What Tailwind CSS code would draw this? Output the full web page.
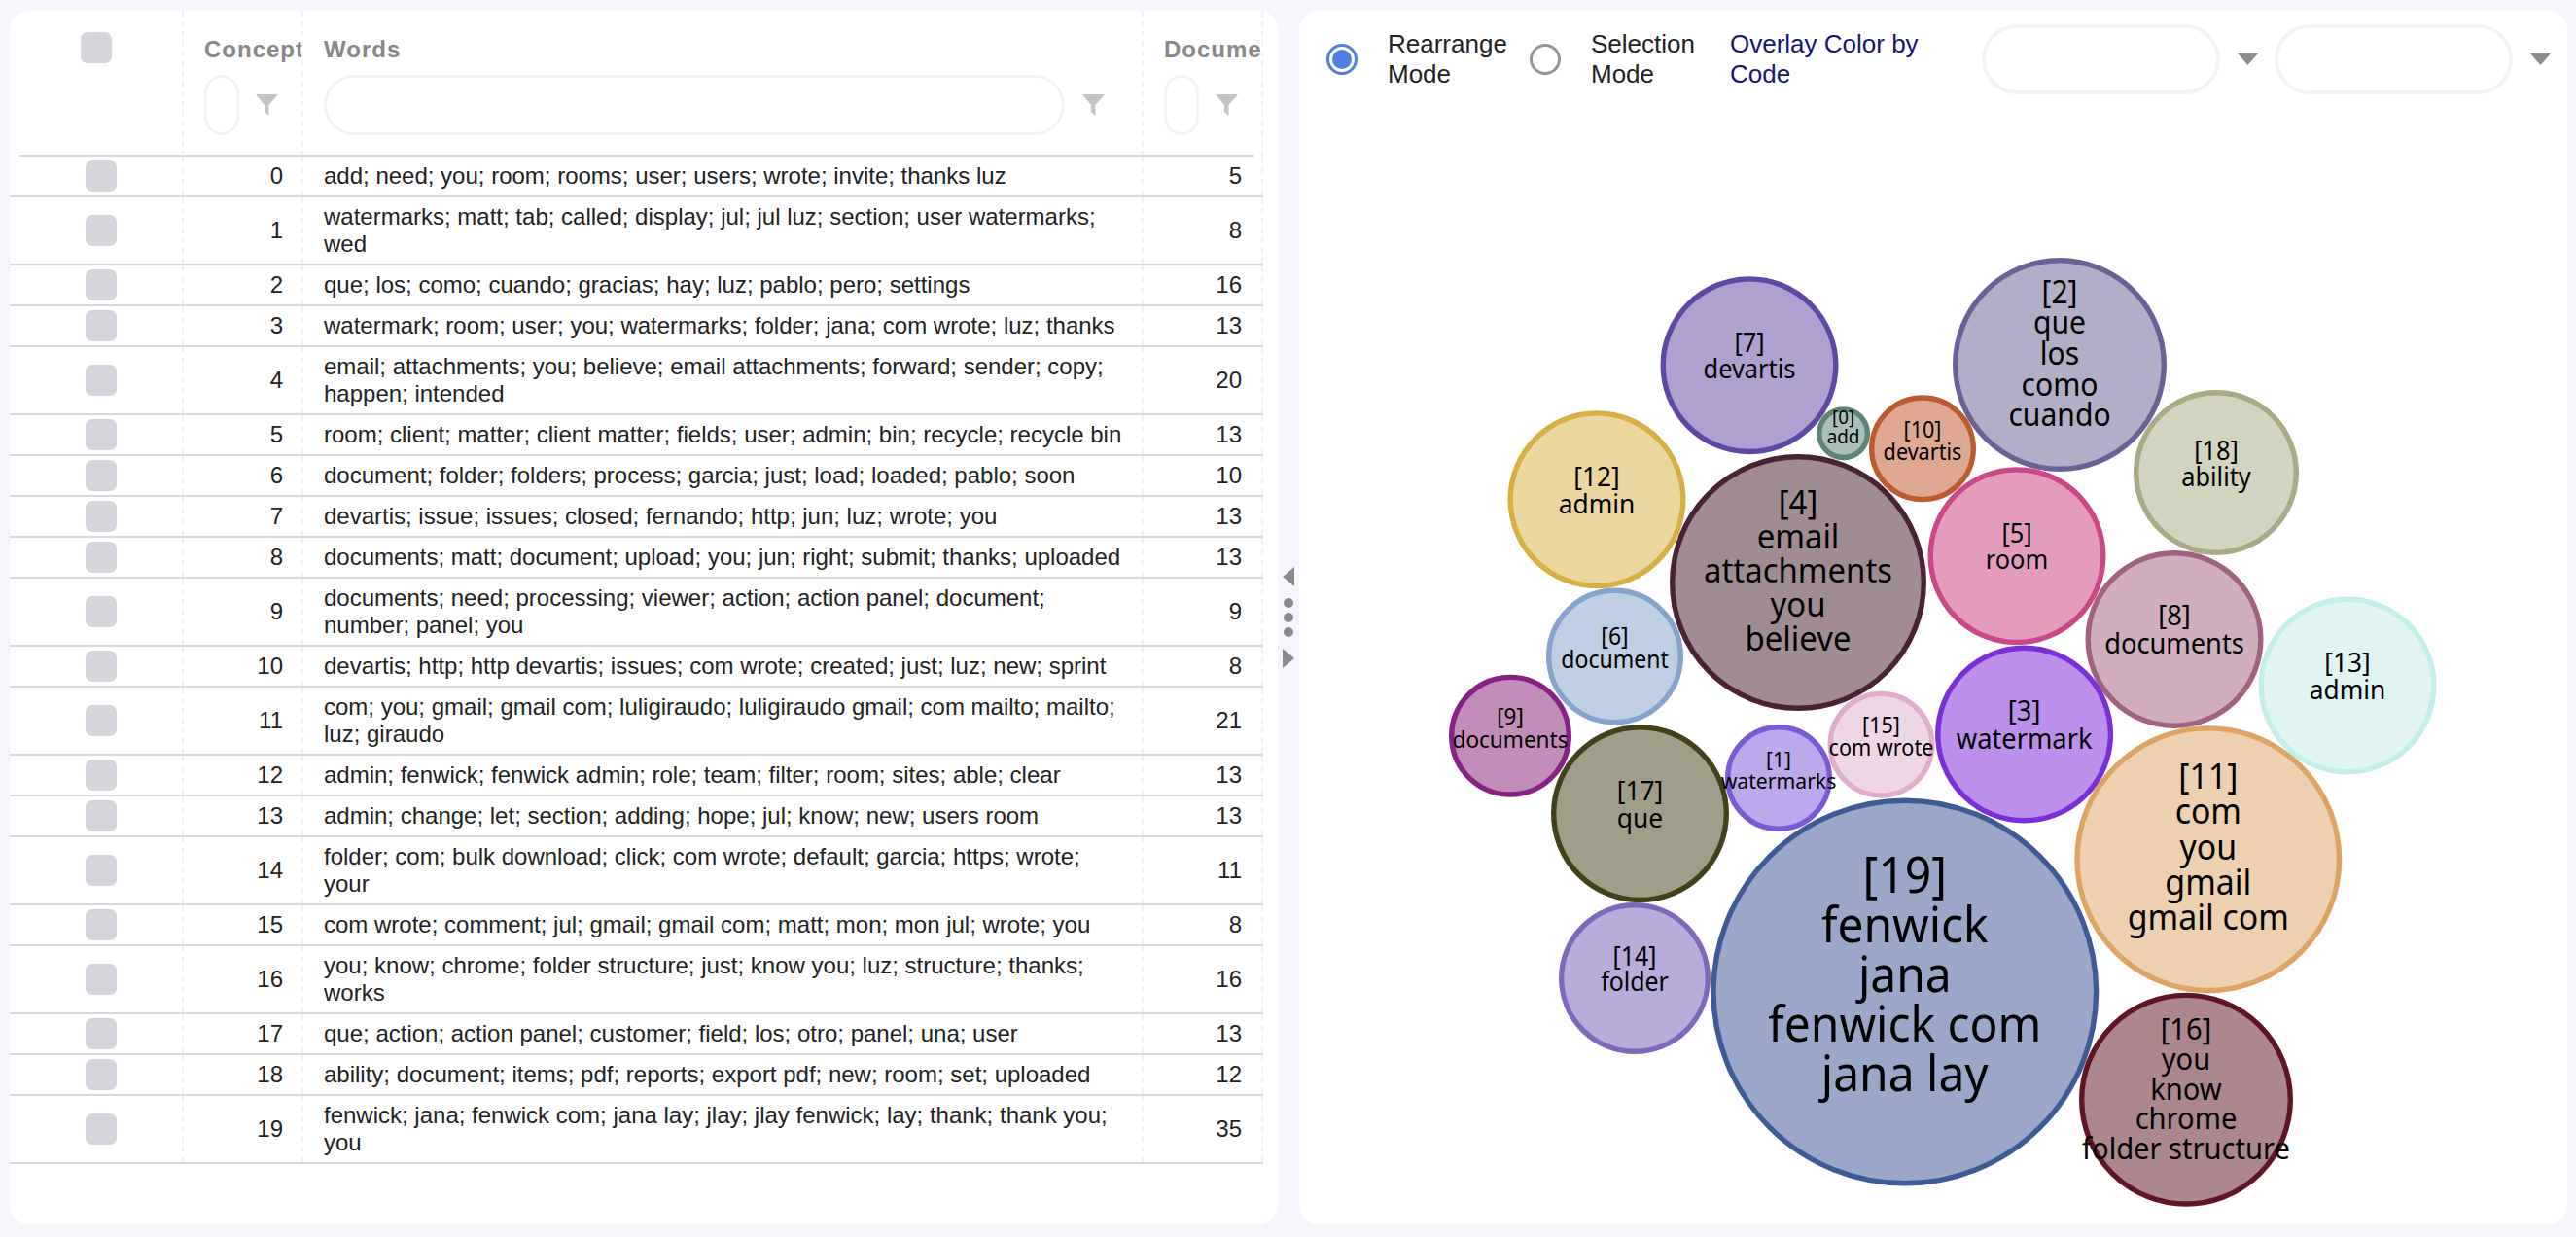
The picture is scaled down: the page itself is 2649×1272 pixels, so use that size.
<!DOCTYPE html>
<html lang="en">
  <head>
    <meta charset="UTF-8" />
    <title>Concepts</title>
    <script src="https://cdn.jsdelivr.net/npm/@tailwindcss/browser@4"></script>
  </head>
  <body class="bg-[#f4f6fb] h-[1272px] w-[2649px] overflow-hidden font-['Liberation_Sans',Arial,sans-serif]">
    <div class="flex h-full pt-[11px] pb-[13px] pl-[10px] pr-[9px]">
      <!-- left: concept table -->
      <div class="w-[1304px] bg-white rounded-[20px] overflow-hidden">
        <div class="w-[1289px]">
          <!-- header -->
          <div class="flex h-[150px] relative text-[24px] font-bold tracking-[1px] text-[#888888]">
            <div class="absolute left-[10px] right-[10px] bottom-0 h-[2px] bg-[#d9d9dc]"></div>
            <div class="w-[179px] border-r-2 border-dashed border-[#f2f2f2] pl-[73px] pt-[22px]">
              <div class="w-[32px] h-[32px] rounded-[7px] bg-[#d5d6dc]"></div>
            </div>
            <div class="w-[123px] border-r-2 border-dashed border-[#f2f2f2] pl-[21px] overflow-hidden whitespace-nowrap">
              <div class="pt-[22px] h-[66px]">Concept</div>
              <div class="flex items-center gap-[17px]">
                <div class="w-[36px] h-[62px] shrink-0 rounded-full border-[3px] border-[#f3f3f3]"></div>
                <svg class="w-[23px] h-[22px] shrink-0" viewBox="0 0 23 22"><path fill="#c4c4c4" d="M0 0H23L13.5 11V22L9 18V11Z" /></svg>
              </div>
            </div>
            <div class="w-[864px] border-r-2 border-dashed border-[#f2f2f2] pl-[21px]">
              <div class="pt-[22px] h-[66px]">Words</div>
              <div class="flex items-center gap-[18px]">
                <div class="w-[762px] h-[62px] shrink-0 rounded-full border-[3px] border-[#f3f3f3]"></div>
                <svg class="w-[23px] h-[22px] shrink-0" viewBox="0 0 23 22"><path fill="#c4c4c4" d="M0 0H23L13.5 11V22L9 18V11Z" /></svg>
              </div>
            </div>
            <div class="w-[123px] border-r-2 border-dashed border-[#f2f2f2] pl-[21px] overflow-hidden whitespace-nowrap">
              <div class="pt-[22px] h-[66px]">Documents</div>
              <div class="flex items-center gap-[17px]">
                <div class="w-[36px] h-[62px] shrink-0 rounded-full border-[3px] border-[#f3f3f3]"></div>
                <svg class="w-[23px] h-[22px] shrink-0" viewBox="0 0 23 22"><path fill="#c4c4c4" d="M0 0H23L13.5 11V22L9 18V11Z" /></svg>
              </div>
            </div>
          </div>

          <!-- rows -->
          <div class="text-[24px] leading-[28px] text-[#222222]">
            <div class="flex h-[42px] border-b-2 border-[#d9d9dc]"><div class="w-[179px] flex items-center border-r-2 border-dashed border-[#f2f2f2] pl-[78px]"><div class="w-[32px] h-[32px] rounded-[7px] bg-[#d5d6dc]"></div></div><div class="w-[123px] flex items-center justify-end border-r-2 border-dashed border-[#f2f2f2] pr-[19px]">0</div><div class="w-[864px] flex items-center border-r-2 border-dashed border-[#f2f2f2] pl-[21px] pr-[20px]">add; need; you; room; rooms; user; users; wrote; invite; thanks luz</div><div class="w-[123px] flex items-center justify-end border-r-2 border-dashed border-[#f2f2f2] pr-[20px]">5</div></div>
            <div class="flex h-[70px] border-b-2 border-[#d9d9dc]"><div class="w-[179px] flex items-center border-r-2 border-dashed border-[#f2f2f2] pl-[78px]"><div class="w-[32px] h-[32px] rounded-[7px] bg-[#d5d6dc]"></div></div><div class="w-[123px] flex items-center justify-end border-r-2 border-dashed border-[#f2f2f2] pr-[19px]">1</div><div class="w-[864px] flex items-center border-r-2 border-dashed border-[#f2f2f2] pl-[21px] pr-[20px]">watermarks; matt; tab; called; display; jul; jul luz; section; user watermarks; wed</div><div class="w-[123px] flex items-center justify-end border-r-2 border-dashed border-[#f2f2f2] pr-[20px]">8</div></div>
            <div class="flex h-[42px] border-b-2 border-[#d9d9dc]"><div class="w-[179px] flex items-center border-r-2 border-dashed border-[#f2f2f2] pl-[78px]"><div class="w-[32px] h-[32px] rounded-[7px] bg-[#d5d6dc]"></div></div><div class="w-[123px] flex items-center justify-end border-r-2 border-dashed border-[#f2f2f2] pr-[19px]">2</div><div class="w-[864px] flex items-center border-r-2 border-dashed border-[#f2f2f2] pl-[21px] pr-[20px]">que; los; como; cuando; gracias; hay; luz; pablo; pero; settings</div><div class="w-[123px] flex items-center justify-end border-r-2 border-dashed border-[#f2f2f2] pr-[20px]">16</div></div>
            <div class="flex h-[42px] border-b-2 border-[#d9d9dc]"><div class="w-[179px] flex items-center border-r-2 border-dashed border-[#f2f2f2] pl-[78px]"><div class="w-[32px] h-[32px] rounded-[7px] bg-[#d5d6dc]"></div></div><div class="w-[123px] flex items-center justify-end border-r-2 border-dashed border-[#f2f2f2] pr-[19px]">3</div><div class="w-[864px] flex items-center border-r-2 border-dashed border-[#f2f2f2] pl-[21px] pr-[20px]">watermark; room; user; you; watermarks; folder; jana; com wrote; luz; thanks</div><div class="w-[123px] flex items-center justify-end border-r-2 border-dashed border-[#f2f2f2] pr-[20px]">13</div></div>
            <div class="flex h-[70px] border-b-2 border-[#d9d9dc]"><div class="w-[179px] flex items-center border-r-2 border-dashed border-[#f2f2f2] pl-[78px]"><div class="w-[32px] h-[32px] rounded-[7px] bg-[#d5d6dc]"></div></div><div class="w-[123px] flex items-center justify-end border-r-2 border-dashed border-[#f2f2f2] pr-[19px]">4</div><div class="w-[864px] flex items-center border-r-2 border-dashed border-[#f2f2f2] pl-[21px] pr-[20px]">email; attachments; you; believe; email attachments; forward; sender; copy; happen; intended</div><div class="w-[123px] flex items-center justify-end border-r-2 border-dashed border-[#f2f2f2] pr-[20px]">20</div></div>
            <div class="flex h-[42px] border-b-2 border-[#d9d9dc]"><div class="w-[179px] flex items-center border-r-2 border-dashed border-[#f2f2f2] pl-[78px]"><div class="w-[32px] h-[32px] rounded-[7px] bg-[#d5d6dc]"></div></div><div class="w-[123px] flex items-center justify-end border-r-2 border-dashed border-[#f2f2f2] pr-[19px]">5</div><div class="w-[864px] flex items-center border-r-2 border-dashed border-[#f2f2f2] pl-[21px] pr-[20px]">room; client; matter; client matter; fields; user; admin; bin; recycle; recycle bin</div><div class="w-[123px] flex items-center justify-end border-r-2 border-dashed border-[#f2f2f2] pr-[20px]">13</div></div>
            <div class="flex h-[42px] border-b-2 border-[#d9d9dc]"><div class="w-[179px] flex items-center border-r-2 border-dashed border-[#f2f2f2] pl-[78px]"><div class="w-[32px] h-[32px] rounded-[7px] bg-[#d5d6dc]"></div></div><div class="w-[123px] flex items-center justify-end border-r-2 border-dashed border-[#f2f2f2] pr-[19px]">6</div><div class="w-[864px] flex items-center border-r-2 border-dashed border-[#f2f2f2] pl-[21px] pr-[20px]">document; folder; folders; process; garcia; just; load; loaded; pablo; soon</div><div class="w-[123px] flex items-center justify-end border-r-2 border-dashed border-[#f2f2f2] pr-[20px]">10</div></div>
            <div class="flex h-[42px] border-b-2 border-[#d9d9dc]"><div class="w-[179px] flex items-center border-r-2 border-dashed border-[#f2f2f2] pl-[78px]"><div class="w-[32px] h-[32px] rounded-[7px] bg-[#d5d6dc]"></div></div><div class="w-[123px] flex items-center justify-end border-r-2 border-dashed border-[#f2f2f2] pr-[19px]">7</div><div class="w-[864px] flex items-center border-r-2 border-dashed border-[#f2f2f2] pl-[21px] pr-[20px]">devartis; issue; issues; closed; fernando; http; jun; luz; wrote; you</div><div class="w-[123px] flex items-center justify-end border-r-2 border-dashed border-[#f2f2f2] pr-[20px]">13</div></div>
            <div class="flex h-[42px] border-b-2 border-[#d9d9dc]"><div class="w-[179px] flex items-center border-r-2 border-dashed border-[#f2f2f2] pl-[78px]"><div class="w-[32px] h-[32px] rounded-[7px] bg-[#d5d6dc]"></div></div><div class="w-[123px] flex items-center justify-end border-r-2 border-dashed border-[#f2f2f2] pr-[19px]">8</div><div class="w-[864px] flex items-center border-r-2 border-dashed border-[#f2f2f2] pl-[21px] pr-[20px]">documents; matt; document; upload; you; jun; right; submit; thanks; uploaded</div><div class="w-[123px] flex items-center justify-end border-r-2 border-dashed border-[#f2f2f2] pr-[20px]">13</div></div>
            <div class="flex h-[70px] border-b-2 border-[#d9d9dc]"><div class="w-[179px] flex items-center border-r-2 border-dashed border-[#f2f2f2] pl-[78px]"><div class="w-[32px] h-[32px] rounded-[7px] bg-[#d5d6dc]"></div></div><div class="w-[123px] flex items-center justify-end border-r-2 border-dashed border-[#f2f2f2] pr-[19px]">9</div><div class="w-[864px] flex items-center border-r-2 border-dashed border-[#f2f2f2] pl-[21px] pr-[20px]">documents; need; processing; viewer; action; action panel; document; number; panel; you</div><div class="w-[123px] flex items-center justify-end border-r-2 border-dashed border-[#f2f2f2] pr-[20px]">9</div></div>
            <div class="flex h-[42px] border-b-2 border-[#d9d9dc]"><div class="w-[179px] flex items-center border-r-2 border-dashed border-[#f2f2f2] pl-[78px]"><div class="w-[32px] h-[32px] rounded-[7px] bg-[#d5d6dc]"></div></div><div class="w-[123px] flex items-center justify-end border-r-2 border-dashed border-[#f2f2f2] pr-[19px]">10</div><div class="w-[864px] flex items-center border-r-2 border-dashed border-[#f2f2f2] pl-[21px] pr-[20px]">devartis; http; http devartis; issues; com wrote; created; just; luz; new; sprint</div><div class="w-[123px] flex items-center justify-end border-r-2 border-dashed border-[#f2f2f2] pr-[20px]">8</div></div>
            <div class="flex h-[70px] border-b-2 border-[#d9d9dc]"><div class="w-[179px] flex items-center border-r-2 border-dashed border-[#f2f2f2] pl-[78px]"><div class="w-[32px] h-[32px] rounded-[7px] bg-[#d5d6dc]"></div></div><div class="w-[123px] flex items-center justify-end border-r-2 border-dashed border-[#f2f2f2] pr-[19px]">11</div><div class="w-[864px] flex items-center border-r-2 border-dashed border-[#f2f2f2] pl-[21px] pr-[20px]">com; you; gmail; gmail com; luligiraudo; luligiraudo gmail; com mailto; mailto; luz; giraudo</div><div class="w-[123px] flex items-center justify-end border-r-2 border-dashed border-[#f2f2f2] pr-[20px]">21</div></div>
            <div class="flex h-[42px] border-b-2 border-[#d9d9dc]"><div class="w-[179px] flex items-center border-r-2 border-dashed border-[#f2f2f2] pl-[78px]"><div class="w-[32px] h-[32px] rounded-[7px] bg-[#d5d6dc]"></div></div><div class="w-[123px] flex items-center justify-end border-r-2 border-dashed border-[#f2f2f2] pr-[19px]">12</div><div class="w-[864px] flex items-center border-r-2 border-dashed border-[#f2f2f2] pl-[21px] pr-[20px]">admin; fenwick; fenwick admin; role; team; filter; room; sites; able; clear</div><div class="w-[123px] flex items-center justify-end border-r-2 border-dashed border-[#f2f2f2] pr-[20px]">13</div></div>
            <div class="flex h-[42px] border-b-2 border-[#d9d9dc]"><div class="w-[179px] flex items-center border-r-2 border-dashed border-[#f2f2f2] pl-[78px]"><div class="w-[32px] h-[32px] rounded-[7px] bg-[#d5d6dc]"></div></div><div class="w-[123px] flex items-center justify-end border-r-2 border-dashed border-[#f2f2f2] pr-[19px]">13</div><div class="w-[864px] flex items-center border-r-2 border-dashed border-[#f2f2f2] pl-[21px] pr-[20px]">admin; change; let; section; adding; hope; jul; know; new; users room</div><div class="w-[123px] flex items-center justify-end border-r-2 border-dashed border-[#f2f2f2] pr-[20px]">13</div></div>
            <div class="flex h-[70px] border-b-2 border-[#d9d9dc]"><div class="w-[179px] flex items-center border-r-2 border-dashed border-[#f2f2f2] pl-[78px]"><div class="w-[32px] h-[32px] rounded-[7px] bg-[#d5d6dc]"></div></div><div class="w-[123px] flex items-center justify-end border-r-2 border-dashed border-[#f2f2f2] pr-[19px]">14</div><div class="w-[864px] flex items-center border-r-2 border-dashed border-[#f2f2f2] pl-[21px] pr-[20px]">folder; com; bulk download; click; com wrote; default; garcia; https; wrote; your</div><div class="w-[123px] flex items-center justify-end border-r-2 border-dashed border-[#f2f2f2] pr-[20px]">11</div></div>
            <div class="flex h-[42px] border-b-2 border-[#d9d9dc]"><div class="w-[179px] flex items-center border-r-2 border-dashed border-[#f2f2f2] pl-[78px]"><div class="w-[32px] h-[32px] rounded-[7px] bg-[#d5d6dc]"></div></div><div class="w-[123px] flex items-center justify-end border-r-2 border-dashed border-[#f2f2f2] pr-[19px]">15</div><div class="w-[864px] flex items-center border-r-2 border-dashed border-[#f2f2f2] pl-[21px] pr-[20px]">com wrote; comment; jul; gmail; gmail com; matt; mon; mon jul; wrote; you</div><div class="w-[123px] flex items-center justify-end border-r-2 border-dashed border-[#f2f2f2] pr-[20px]">8</div></div>
            <div class="flex h-[70px] border-b-2 border-[#d9d9dc]"><div class="w-[179px] flex items-center border-r-2 border-dashed border-[#f2f2f2] pl-[78px]"><div class="w-[32px] h-[32px] rounded-[7px] bg-[#d5d6dc]"></div></div><div class="w-[123px] flex items-center justify-end border-r-2 border-dashed border-[#f2f2f2] pr-[19px]">16</div><div class="w-[864px] flex items-center border-r-2 border-dashed border-[#f2f2f2] pl-[21px] pr-[20px]">you; know; chrome; folder structure; just; know you; luz; structure; thanks; works</div><div class="w-[123px] flex items-center justify-end border-r-2 border-dashed border-[#f2f2f2] pr-[20px]">16</div></div>
            <div class="flex h-[42px] border-b-2 border-[#d9d9dc]"><div class="w-[179px] flex items-center border-r-2 border-dashed border-[#f2f2f2] pl-[78px]"><div class="w-[32px] h-[32px] rounded-[7px] bg-[#d5d6dc]"></div></div><div class="w-[123px] flex items-center justify-end border-r-2 border-dashed border-[#f2f2f2] pr-[19px]">17</div><div class="w-[864px] flex items-center border-r-2 border-dashed border-[#f2f2f2] pl-[21px] pr-[20px]">que; action; action panel; customer; field; los; otro; panel; una; user</div><div class="w-[123px] flex items-center justify-end border-r-2 border-dashed border-[#f2f2f2] pr-[20px]">13</div></div>
            <div class="flex h-[42px] border-b-2 border-[#d9d9dc]"><div class="w-[179px] flex items-center border-r-2 border-dashed border-[#f2f2f2] pl-[78px]"><div class="w-[32px] h-[32px] rounded-[7px] bg-[#d5d6dc]"></div></div><div class="w-[123px] flex items-center justify-end border-r-2 border-dashed border-[#f2f2f2] pr-[19px]">18</div><div class="w-[864px] flex items-center border-r-2 border-dashed border-[#f2f2f2] pl-[21px] pr-[20px]">ability; document; items; pdf; reports; export pdf; new; room; set; uploaded</div><div class="w-[123px] flex items-center justify-end border-r-2 border-dashed border-[#f2f2f2] pr-[20px]">12</div></div>
            <div class="flex h-[70px] border-b-2 border-[#d9d9dc]"><div class="w-[179px] flex items-center border-r-2 border-dashed border-[#f2f2f2] pl-[78px]"><div class="w-[32px] h-[32px] rounded-[7px] bg-[#d5d6dc]"></div></div><div class="w-[123px] flex items-center justify-end border-r-2 border-dashed border-[#f2f2f2] pr-[19px]">19</div><div class="w-[864px] flex items-center border-r-2 border-dashed border-[#f2f2f2] pl-[21px] pr-[20px]">fenwick; jana; fenwick com; jana lay; jlay; jlay fenwick; lay; thank; thank you; you</div><div class="w-[123px] flex items-center justify-end border-r-2 border-dashed border-[#f2f2f2] pr-[20px]">35</div></div>
          </div>
        </div>
      </div>

      <!-- splitter -->
      <div class="w-[22px] flex flex-col items-center justify-center">
        <svg class="w-[12px] h-[104px]" viewBox="0 0 12 104">
          <path fill="#8a8a8a" d="M12 0V20L0 10Z" />
          <circle cx="6" cy="37" r="5" fill="#8a8a8a" />
          <circle cx="6" cy="52" r="5" fill="#8a8a8a" />
          <circle cx="6" cy="67" r="5" fill="#8a8a8a" />
          <path fill="#8a8a8a" d="M0 84V104L12 94Z" />
        </svg>
      </div>

      <!-- right: bubble view -->
      <div class="relative flex-1 bg-white rounded-[20px] overflow-hidden">
        <div class="relative z-10 flex items-start pt-[14px] text-[26px] leading-[31px] text-[#222222]">
          <div class="ml-[28px] mt-[20px] w-[32px] h-[32px] rounded-full border-[3px] border-[#4f7fe0] p-[3px]"><div class="w-full h-full rounded-full bg-[#4f7fe0]"></div></div>
          <div class="ml-[31px] mt-[5px] w-[146px]">Rearrange Mode</div>
          <div class="mt-[20px] w-[32px] h-[32px] rounded-full border-[3px] border-[#949494]"></div>
          <div class="ml-[31px] mt-[5px] w-[143px]">Selection Mode</div>
          <div class="mt-[5px] w-[200px] text-[#14147a]">Overlay Color by Code</div>
          <div class="ml-[59px] w-[245px] h-[72px] rounded-full border-[4px] border-[#f3f3f3]"></div>
          <svg class="ml-[18px] mt-[30px] w-[21px] h-[12px]" viewBox="0 0 21 12"><path fill="#8c8c8c" d="M0 0H21L10.5 12Z" /></svg>
          <div class="ml-[17px] w-[245px] h-[72px] rounded-full border-[4px] border-[#f3f3f3]"></div>
          <svg class="ml-[18px] mt-[30px] w-[21px] h-[12px]" viewBox="0 0 21 12"><path fill="#8c8c8c" d="M0 0H21L10.5 12Z" /></svg>
        </div>

        <!-- svg coordinates are page coordinates: the panel begins at 1336,11 -->
        <svg class="absolute left-0 top-0 w-[1304px] h-[1248px]" viewBox="1336 11 1304 1248" text-anchor="middle" fill="#000000" font-family="'Noto Sans','Open Sans',sans-serif">
          <g stroke-width="5.4">
            <circle cx="1799" cy="375.7" r="88.8" fill="#afa0cf" stroke="#5f48a3" />
            <circle cx="2118" cy="375" r="107.3" fill="#b2aec8" stroke="#6a6296" />
            <circle cx="1895.6" cy="445.7" r="24.8" fill="#a9bfb9" stroke="#5c8578" />
            <circle cx="1977" cy="461.3" r="52.3" fill="#dea891" stroke="#bd5a2f" />
            <circle cx="1642" cy="513.7" r="88.8" fill="#ead69e" stroke="#d8af45" />
            <circle cx="1849" cy="599" r="129.3" fill="#a08c92" stroke="#4a2235" />
            <circle cx="2074" cy="571.7" r="88.8" fill="#e49cbe" stroke="#cc4788" />
            <circle cx="2279" cy="486" r="82.3" fill="#d3d4c0" stroke="#a9ab85" />
            <circle cx="2236" cy="657.5" r="88.8" fill="#d0aebd" stroke="#a0627f" />
            <circle cx="2414" cy="705" r="88.8" fill="#e0f5f2" stroke="#c4efe8" />
            <circle cx="1660.5" cy="675" r="67.8" fill="#bfcfe3" stroke="#85a3cc" />
            <circle cx="1553" cy="756.7" r="60.3" fill="#c28cb9" stroke="#862283" />
            <circle cx="1934.5" cy="765.7" r="52.3" fill="#efd6e7" stroke="#e0aecd" />
            <circle cx="2081.6" cy="755" r="88.8" fill="#bc90ea" stroke="#7a2fd8" />
            <circle cx="1829" cy="800" r="52.3" fill="#bca8ea" stroke="#7b5ad5" />
            <circle cx="1686.5" cy="836.7" r="88.8" fill="#a09e88" stroke="#43411a" />
            <circle cx="2270.8" cy="883.7" r="134.8" fill="#edd0b0" stroke="#dea562" />
            <circle cx="1681" cy="1006" r="75.3" fill="#b8acda" stroke="#7f68bc" />
            <circle cx="1958.8" cy="1020" r="196.8" fill="#9aa7c8" stroke="#3f5b96" />
            <circle cx="2248" cy="1130.7" r="107.3" fill="#ac878e" stroke="#601425" />
          </g>
          <g transform="translate(1799 375.7) scale(.94 1)" font-size="27"><text y="-13.5">[7]</text><text y="13.5">devartis</text></g>
          <g transform="translate(2118 375) scale(.94 1)" font-size="32"><text y="-63.4">[2]</text><text y="-31.7">que</text><text>los</text><text y="31.7">como</text><text y="63.4">cuando</text></g>
          <g transform="translate(1895.6 445.7) scale(.94 1)" font-size="20"><text y="-10">[0]</text><text y="10">add</text></g>
          <g transform="translate(1977 461.3) scale(.94 1)" font-size="23"><text y="-11.5">[10]</text><text y="11.5">devartis</text></g>
          <g transform="translate(1642 513.7) scale(.94 1)" font-size="28"><text y="-14">[12]</text><text y="14">admin</text></g>
          <g transform="translate(1849 599) scale(.94 1)" font-size="35"><text y="-70">[4]</text><text y="-35">email</text><text>attachments</text><text y="35">you</text><text y="70">believe</text></g>
          <g transform="translate(2074 571.7) scale(.94 1)" font-size="27"><text y="-13.5">[5]</text><text y="13.5">room</text></g>
          <g transform="translate(2279 486) scale(.94 1)" font-size="27"><text y="-13.5">[18]</text><text y="13.5">ability</text></g>
          <g transform="translate(2236 657.5) scale(.94 1)" font-size="29"><text y="-14.5">[8]</text><text y="14.5">documents</text></g>
          <g transform="translate(2414 705) scale(.94 1)" font-size="28"><text y="-14">[13]</text><text y="14">admin</text></g>
          <g transform="translate(1660.5 675) scale(.94 1)" font-size="24.5"><text y="-12.2">[6]</text><text y="12.2">document</text></g>
          <g transform="translate(1553 756.7) scale(.94 1)" font-size="24"><text y="-12">[9]</text><text y="12">documents</text></g>
          <g transform="translate(1934.5 765.7) scale(.94 1)" font-size="23"><text y="-11.5">[15]</text><text y="11.5">com wrote</text></g>
          <g transform="translate(2081.6 755) scale(.94 1)" font-size="29"><text y="-14.5">[3]</text><text y="14.5">watermark</text></g>
          <g transform="translate(1829 800) scale(.94 1)" font-size="22.5"><text y="-11.2">[1]</text><text y="11.2">watermarks</text></g>
          <g transform="translate(1686.5 836.7) scale(.94 1)" font-size="28"><text y="-14">[17]</text><text y="14">que</text></g>
          <g transform="translate(2270.8 883.7) scale(.94 1)" font-size="36"><text y="-72.6">[11]</text><text y="-36.3">com</text><text>you</text><text y="36.3">gmail</text><text y="72.6">gmail com</text></g>
          <g transform="translate(1681 1006) scale(.94 1)" font-size="26.5"><text y="-13.2">[14]</text><text y="13.2">folder</text></g>
          <g transform="translate(1958.8 1020) scale(.94 1)" font-size="51"><text y="-102">[19]</text><text y="-51">fenwick</text><text>jana</text><text y="51">fenwick com</text><text y="102">jana lay</text></g>
          <g transform="translate(2248 1130.7) scale(.94 1)" font-size="31"><text y="-61.4">[16]</text><text y="-30.7">you</text><text>know</text><text y="30.7">chrome</text><text y="61.4">folder structure</text></g>
        </svg>
      </div>
    </div>
  </body>
</html>
